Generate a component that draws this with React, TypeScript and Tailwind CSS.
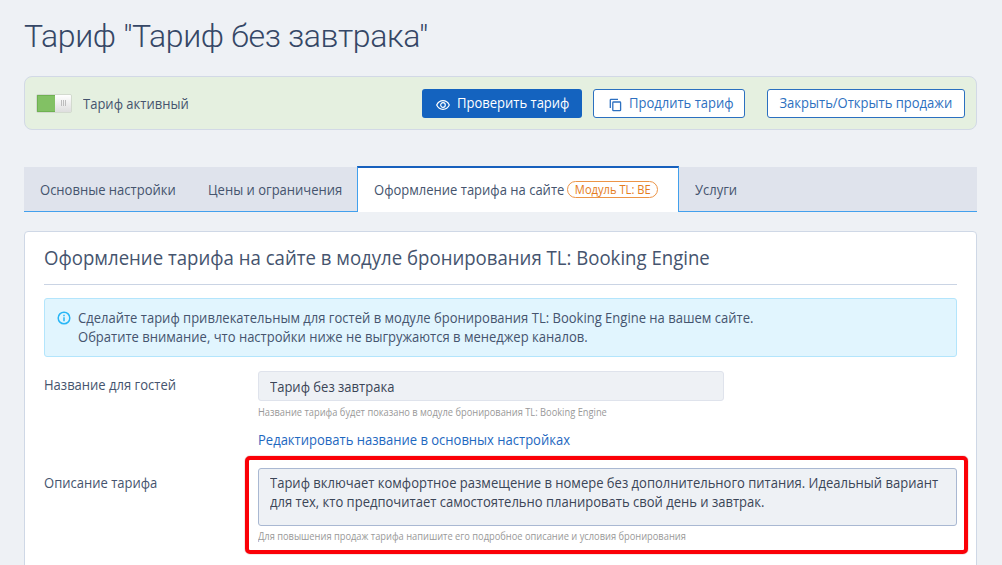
import React from "react";

const font = "font-['Open_Sans','Noto_Sans',sans-serif]";

/* Slightly condensed run of text; keeps its left edge unless told otherwise. */
function T({ children, className = "origin-left" }: { children: React.ReactNode; className?: string }) {
  return <span className={`inline-block scale-x-[0.93] ${className}`}>{children}</span>;
}

function EyeIcon() {
  return (
    <svg width="14" height="14" viewBox="0 0 14 14" fill="none" stroke="currentColor" strokeWidth="1.2">
      <path d="M.7 7C2 4.300 4.200 2.700 7 2.700S12 4.300 13.300 7C12 9.700 9.800 11.300 7 11.300S2 9.700.7 7Z" />
      <circle cx="7" cy="7" r="2.300" />
    </svg>
  );
}

function CopyIcon() {
  return (
    <svg width="13" height="14" viewBox="0 0 13 14" fill="none" stroke="currentColor" strokeWidth="1.300">
      <path d="M1.300 10V1.900Q1.300 1.300 1.900 1.300H9" />
      <rect x="3.800" y="4" width="7.800" height="8.700" rx=".7" />
    </svg>
  );
}

function InfoIcon() {
  return (
    <svg width="14" height="14" viewBox="0 0 14 14" fill="none" stroke="#29b6f6" strokeWidth="1.500">
      <circle cx="7" cy="7" r="5.800" />
      <path d="M7 6.300V10.200M7 3.800V5.200" />
    </svg>
  );
}

function Toggle() {
  return (
    <div className="flex h-[19px] w-9 overflow-hidden rounded-[2px] border border-[#d3dacf]">
      <div className="w-[18px] border border-r-0 border-[#6fb152] bg-[#82c164]" />
      <div className="flex flex-1 items-center justify-center gap-px bg-gradient-to-b from-white to-[#dedede]">
        <i className="h-1.5 w-px bg-[#bdbdbd]" />
        <i className="h-1.5 w-px bg-[#bdbdbd]" />
        <i className="h-1.5 w-px bg-[#bdbdbd]" />
      </div>
    </div>
  );
}

export default function App() {
  return (
    <div className={`h-[565px] w-[1002px] overflow-hidden bg-[#eef1f5] pr-[25px] pl-6 text-[14px] leading-[19px] whitespace-nowrap text-[#45546e] ${font}`}>
      <h1 className="flex h-[76px] items-center pb-1 font-['Roboto',sans-serif] text-[32px] leading-10 font-light tracking-[-0.35px] text-[#354766]">
        Тариф "Тариф без завтрака"
      </h1>

      <section className="flex h-[54px] items-center rounded-lg border border-[#d2d9e6] bg-[#e5f0e0] px-[11px]">
        <Toggle />
        <span className="ml-[11px]"><T>Тариф активный</T></span>
        <button className="ml-auto flex h-[29px] w-[160px] items-center rounded-[3px] bg-[#1463bf] pb-px pl-[14px] text-white">
          <span className="pt-[4px]"><EyeIcon /></span>
          <span className="ml-[7px]"><T>Проверить тариф</T></span>
        </button>
        <button className="ml-[11px] flex h-[29px] w-[152px] items-center rounded-[3px] border border-[#2b70c0] bg-white pb-px pl-[15px] text-[#2d70c0]">
          <span className="pt-[4px]"><CopyIcon /></span>
          <span className="ml-[7px]"><T>Продлить тариф</T></span>
        </button>
        <button className="ml-[22px] flex h-[29px] w-[198px] items-center justify-center rounded-[3px] border border-[#2b70c0] bg-white pb-px text-[#2d70c0]">
          <T className="origin-center">Закрыть/Открыть продажи</T>
        </button>
      </section>

      <nav className="mt-9 flex h-[46px] items-end">
        <div className="flex h-[45px] w-[333px] items-center border-b border-[#42a0ed] bg-[#dfe3ec] pl-4">
          <span className="w-[168px]"><T>Основные настройки</T></span>
          <T>Цены и ограничения</T>
        </div>
        <div className="flex h-[46px] w-[322px] items-center border-x border-t-2 border-x-[#42a0ed] border-t-[#1760bd] bg-white pb-px pl-[16px]">
          <span className="w-[193px]"><T>Оформление тарифа на сайте</T></span>
          <span className="flex h-[17px] w-[91px] items-center justify-center rounded-full border border-[#ec9447] text-[12px] text-[#e57c20]">
            <T className="origin-center">Модуль TL: BE</T>
          </span>
        </div>
        <div className="flex h-[45px] flex-1 items-center border-b border-[#42a0ed] bg-[#dfe3ec] pl-4"><T>Услуги</T></div>
      </nav>

      <main className="mt-[19px] h-[345px] rounded-t border border-[#cfd8e6] bg-white px-[19px]">
        <h2 className="h-[53px] border-b border-[#cad4e4] pt-[13px] text-[20px] leading-[26px]">
          <T>Оформление тарифа на сайте в модуле бронирования TL: Booking Engine</T>
        </h2>
        <div className="mt-[13px] flex h-[59px] rounded-[3px] border border-[#b3e5fc] bg-[#e1f5fe] pt-[9px] pl-[12px]">
          <div className="mt-[3px] mr-[7px]"><InfoIcon /></div>
          <p>
            <T>
              Сделайте тариф привлекательным для гостей в модуле бронирования TL: Booking Engine на вашем сайте.<br />
              Обратите внимание, что настройки ниже не выгружаются в менеджер каналов.
            </T>
          </p>
        </div>
        <div className="mt-[14px] flex h-[78px]">
          <label className="w-[214px] pt-1"><T>Название для гостей</T></label>
          <div>
            <div className="flex h-[30px] w-[466px] items-center rounded-[3px] border border-[#dfe3ec] bg-[#eef1f5] pl-[11px] text-[#3b4557]"><T>Тариф без завтрака</T></div>
            <p className="mt-[3px] h-4 text-[10px] leading-4 text-[#999]"><T>Название тарифа будет показано в модуле бронирования TL: Booking Engine</T></p>
            <a className="mt-[10px] block text-[#1e68bf]"><T>Редактировать название в основных настройках</T></a>
          </div>
        </div>
        <div className="mt-[7px] flex">
          <label className="w-[201px] shrink-0 pt-[17px]"><T>Описание тарифа</T></label>
          <div className="h-[98px] w-[723px] shrink-0 rounded-[5px] border-4 border-[#fb0007] px-[9px] pt-[8px] shadow-[0_0_1px_#900]">
            <div className="h-[58px] w-[699px] rounded-[3px] border border-[#a9b8d2] bg-[#eef1f5] pt-[4px] pl-[11px] text-[#3b4557]">
              <T>
                Тариф включает комфортное размещение в номере без дополнительного питания. Идеальный вариант<br />
                для тех, кто предпочитает самостоятельно планировать свой день и завтрак.
              </T>
            </div>
            <p className="mt-[2px] h-4 text-[10px] leading-4 text-[#999]"><T>Для повышения продаж тарифа напишите его подробное описание и условия бронирования</T></p>
          </div>
        </div>
      </main>
    </div>
  );
}
